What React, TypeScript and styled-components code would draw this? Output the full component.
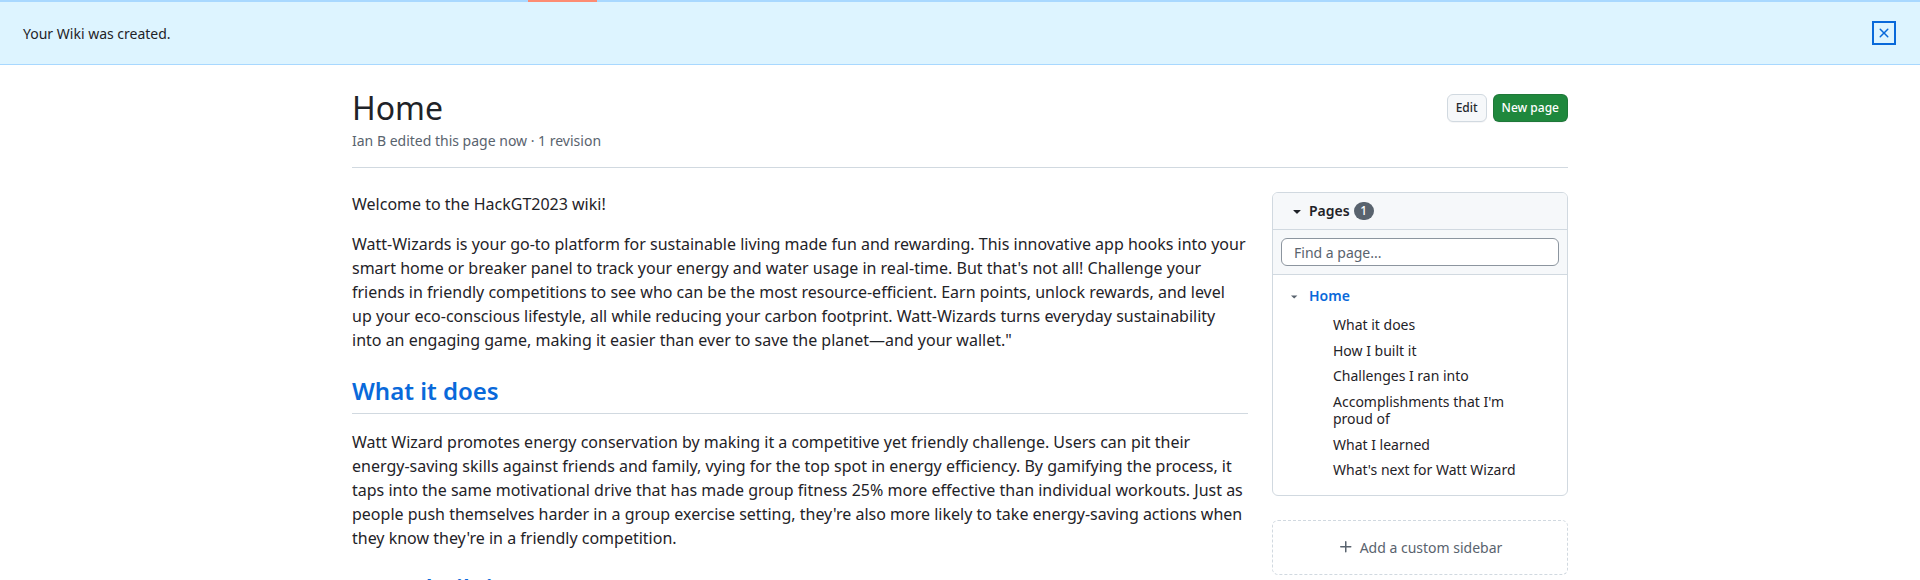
import React from "react";
import styled, { createGlobalStyle } from "styled-components";

const GlobalStyle = createGlobalStyle`
  html, body {
    margin: 0;
    padding: 0;
    overflow: hidden;
    background: #ffffff;
  }
  body {
    font-family: "Noto Sans", "Liberation Sans", sans-serif;
    font-size: 14px;
    line-height: 1.5;
    color: #1f2328;
  }
  * { box-sizing: border-box; }
`;

const TabStrip = styled.div`
  height: 2px;
  display: flex;
  background: #a8d8ff;
`;

const SelectedTab = styled.div`
  margin-left: 528px;
  width: 69px;
  height: 2px;
  background: #fd8c73;
`;

const Flash = styled.div`
  height: 63px;
  display: flex;
  align-items: center;
  justify-content: space-between;
  padding: 0 24px 0 23px;
  background: #ddf4ff;
  border-bottom: 1px solid #a8d8ff;
  font-size: 14px;
  line-height: 21px;
  color: #1f2328;
`;

const CloseButton = styled.button`
  width: 24px;
  height: 24px;
  display: flex;
  align-items: center;
  justify-content: center;
  padding: 0;
  margin-bottom: 1px;
  background: transparent;
  border: 2px solid #0969da;
  border-radius: 0;
  color: #0969da;
`;

const Container = styled.div`
  width: 1216px;
  margin: 0 auto;
  padding-top: 23px;
`;

const HeaderRow = styled.div`
  display: flex;
  justify-content: space-between;
  align-items: flex-start;
  padding-bottom: 16px;
  border-bottom: 1px solid #d1d9e0;
`;

const Title = styled.h1`
  margin: 0;
  font-size: 32px;
  line-height: 40px;
  font-weight: 400;
  color: #1f2328;
`;

const Meta = styled.div`
  margin-top: 2px;
  font-size: 14px;
  line-height: 21px;
  color: #59636e;
`;

const Actions = styled.div`
  display: flex;
  gap: 6px;
  margin-top: 6px;
`;

const Button = styled.button<{ $primary?: boolean }>`
  height: 28px;
  padding: 0 8px;
  font-family: inherit;
  font-size: 12px;
  font-weight: 500;
  line-height: 20px;
  border-radius: 6px;
  border: 1px solid ${(p) => (p.$primary ? "rgba(31,35,40,0.15)" : "#d1d9e0")};
  background: ${(p) => (p.$primary ? "#1f883d" : "#f6f8fa")};
  color: ${(p) => (p.$primary ? "#ffffff" : "#25292e")};
  box-shadow: 0 1px 0 rgba(31, 35, 40, 0.04);
`;

const Body = styled.div`
  display: flex;
  gap: 24px;
  margin-top: 24px;
`;

const Markdown = styled.div`
  width: 896px;
  font-size: 16px;
  line-height: 24px;
  color: #1f2328;

  p {
    margin: 0 0 16px;
  }
`;

const Heading = styled.h2<{ $top?: number }>`
  margin: ${(p) => p.$top ?? 24}px 0 16px;
  padding-bottom: 7px;
  font-size: 24px;
  line-height: 30px;
  font-weight: 600;
  color: #0969da;
  border-bottom: 1px solid #d1d9e0;
`;

const Sidebar = styled.div`
  width: 296px;
  display: flex;
  flex-direction: column;
  gap: 24px;
`;

const Box = styled.div`
  border: 1px solid #d1d9e0;
  border-radius: 6px;
  overflow: hidden;
`;

const BoxHeader = styled.div`
  display: flex;
  align-items: center;
  gap: 4px;
  padding: 8px 16px;
  height: 37px;
  background: #f6f8fa;
  border-bottom: 1px solid #d1d9e0;
  font-size: 14px;
  font-weight: 600;
  line-height: 20px;
`;

const Counter = styled.span`
  display: inline-block;
  min-width: 20px;
  height: 18px;
  padding: 0 6px;
  border-radius: 2em;
  background: #59636e;
  color: #ffffff;
  font-size: 12px;
  font-weight: 500;
  line-height: 18px;
  text-align: center;
`;

const FilterArea = styled.div`
  padding: 8px;
  background: #f6f8fa;
  border-bottom: 1px solid #d1d9e0;
`;

const FilterInput = styled.input`
  display: block;
  width: 100%;
  height: 28px;
  padding: 0 12px;
  font-family: inherit;
  font-size: 14px;
  color: #1f2328;
  background: #ffffff;
  border: 1px solid #8c959f;
  border-radius: 6px;
  outline: none;

  &::placeholder {
    color: #59636e;
  }
`;

const PageList = styled.ul`
  list-style: none;
  margin: 0;
  padding: 4px 0 12px;
`;

const PageRow = styled.li`
  display: flex;
  align-items: center;
  gap: 8px;
  padding: 6px 16px;
  font-size: 14px;
  line-height: 21px;
  font-weight: 600;
  color: #0969da;
`;

const SubList = styled.ul`
  list-style: none;
  margin: 0;
  padding: 0;
`;

const SubItem = styled.li`
  padding: 4px 32px 4px 60px;
  font-size: 14px;
  line-height: 17.5px;
  color: #1f2328;
`;

const CustomSidebar = styled.div`
  display: flex;
  align-items: center;
  justify-content: center;
  gap: 6px;
  height: 55px;
  border: 1px dashed #d1d9e0;
  border-radius: 6px;
  font-size: 14px;
  line-height: 21px;
  color: #59636e;
`;

const Caret = ({ color }: { color: string }) => (
  <svg width="16" height="16" viewBox="0 0 16 16" fill={color}>
    <path d="m4.427 7.427 3.396 3.396a.25.25 0 0 0 .354 0l3.396-3.396A.25.25 0 0 0 11.396 7H4.604a.25.25 0 0 0-.177.427Z" />
  </svg>
);

const SmallCaret = () => (
  <svg width="12" height="16" viewBox="0 0 12 16" fill="#59636e">
    <path d="M2 7.4h6.4L5.2 10.6z" />
  </svg>
);

const XIcon = () => (
  <svg width="16" height="16" viewBox="0 0 16 16" fill="currentColor">
    <path d="M3.72 3.72a.75.75 0 0 1 1.06 0L8 6.94l3.22-3.22a.749.749 0 0 1 1.275.326.749.749 0 0 1-.215.734L9.06 8l3.22 3.22a.749.749 0 0 1-.326 1.275.749.749 0 0 1-.734-.215L8 9.06l-3.22 3.22a.751.751 0 0 1-1.042-.018.751.751 0 0 1-.018-1.042L6.94 8 3.72 4.78a.75.75 0 0 1 0-1.06Z" />
  </svg>
);

const PlusIcon = () => (
  <svg width="16" height="16" viewBox="0 0 16 16" fill="#59636e">
    <path d="M7.75 2a.75.75 0 0 1 .75.75V7h4.25a.75.75 0 0 1 0 1.5H8.5v4.25a.75.75 0 0 1-1.5 0V8.5H2.75a.75.75 0 0 1 0-1.5H7V2.75A.75.75 0 0 1 7.75 2Z" />
  </svg>
);

const subPages = [
  "What it does",
  "How I built it",
  "Challenges I ran into",
  "Accomplishments that I'm proud of",
  "What I learned",
  "What's next for Watt Wizard",
];

export default function App() {
  return (
    <>
      <GlobalStyle />
      <TabStrip>
        <SelectedTab />
      </TabStrip>
      <Flash>
        <span>Your Wiki was created.</span>
        <CloseButton aria-label="Dismiss">
          <XIcon />
        </CloseButton>
      </Flash>
      <Container>
        <HeaderRow>
          <div>
            <Title>Home</Title>
            <Meta>Ian B edited this page now · 1 revision</Meta>
          </div>
          <Actions>
            <Button>Edit</Button>
            <Button $primary>New page</Button>
          </Actions>
        </HeaderRow>
        <Body>
          <Markdown>
            <p>Welcome to the HackGT2023 wiki!</p>
            <p>
              Watt-Wizards is your go-to platform for sustainable living made fun and rewarding. This
              innovative app hooks into your smart home or breaker panel to track your energy and water
              usage in real-time. But that's not all! Challenge your friends in friendly competitions to
              see who can be the most resource-efficient. Earn points, unlock rewards, and level up your
              eco-conscious lifestyle, all while reducing your carbon footprint. Watt-Wizards turns
              everyday sustainability into an engaging game, making it easier than ever to save the
              planet—and your wallet."
            </p>
            <Heading>What it does</Heading>
            <p>
              Watt Wizard promotes energy conservation by making it a competitive yet friendly challenge.
              Users can pit their energy-saving skills against friends and family, vying for the top spot
              in energy efficiency. By gamifying the process, it taps into the same motivational drive
              that has made group fitness 25% more effective than individual workouts. Just as people push
              themselves harder in a group exercise setting, they're also more likely to take
              energy-saving actions when they know they're in a friendly competition.
            </p>
            <Heading $top={23}>How I built it</Heading>
          </Markdown>
          <Sidebar>
            <Box>
              <BoxHeader>
                <Caret color="#1f2328" />
                <span>Pages</span>
                <Counter>1</Counter>
              </BoxHeader>
              <FilterArea>
                <FilterInput placeholder="Find a page..." />
              </FilterArea>
              <PageList>
                <PageRow>
                  <SmallCaret />
                  <span>Home</span>
                </PageRow>
                <li>
                  <SubList>
                    {subPages.map((p) => (
                      <SubItem key={p}>{p}</SubItem>
                    ))}
                  </SubList>
                </li>
              </PageList>
            </Box>
            <CustomSidebar>
              <PlusIcon />
              <span>Add a custom sidebar</span>
            </CustomSidebar>
          </Sidebar>
        </Body>
      </Container>
    </>
  );
}
